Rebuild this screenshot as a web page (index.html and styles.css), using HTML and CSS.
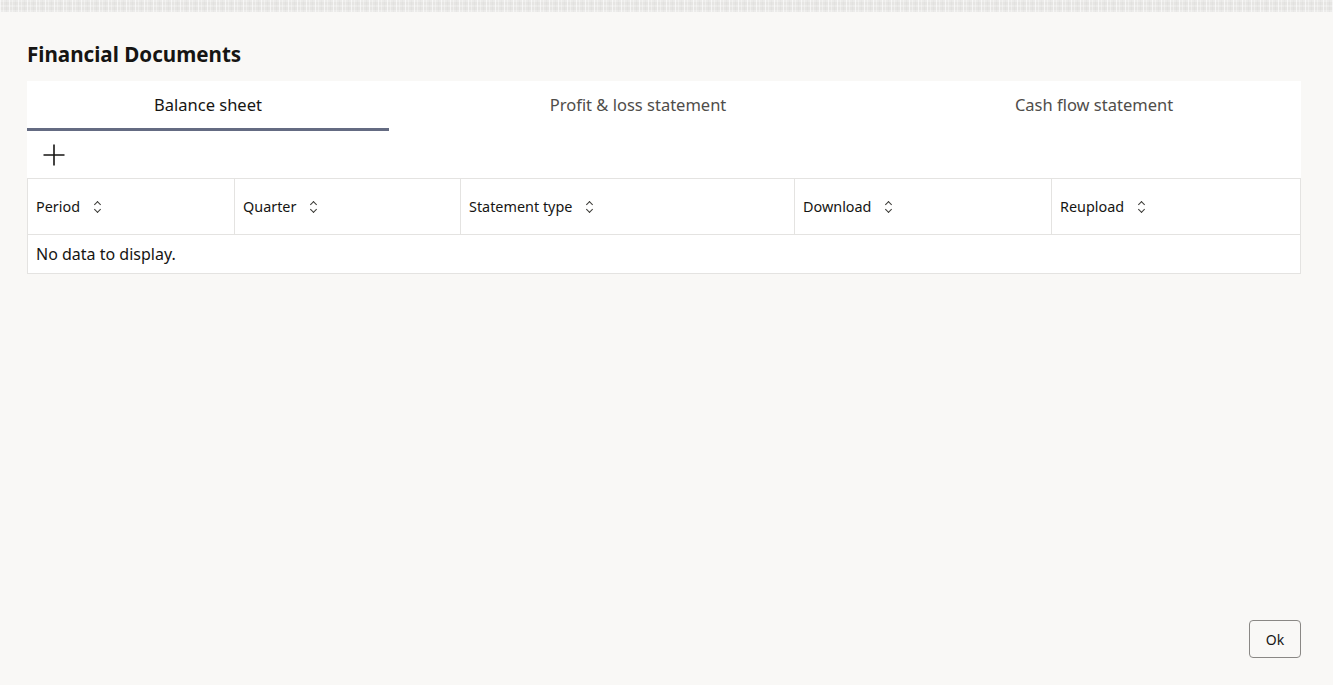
FILE: index.html
```html
<!DOCTYPE html>
<html lang="en">
<head>
  <meta charset="UTF-8">
  <meta name="viewport" content="width=device-width, initial-scale=1.0">
  <title>Financial Documents</title>
  <link rel="stylesheet" href="styles.css">
</head>
<body>

<div class="top-strip"></div>

<div class="page">
  <h1 class="title">Financial Documents</h1>

  <div class="panel">
    <div class="tabs">
      <div class="tab tab-active tab-1">Balance sheet</div>
      <div class="tab tab-2">Profit &amp; loss statement</div>
      <div class="tab tab-3">Cash flow statement</div>
    </div>

    <div class="toolbar">
      <button class="add-btn" title="Add">
        <svg width="24" height="24" viewBox="0 0 24 24"><path d="M12 1.5v21M1.5 12h21" stroke="#161513" stroke-width="1.6" fill="none"/></svg>
      </button>
    </div>

    <table class="grid">
      <thead>
        <tr>
          <th class="c1">Period <span class="sort"></span></th>
          <th class="c2">Quarter <span class="sort"></span></th>
          <th class="c3">Statement type <span class="sort"></span></th>
          <th class="c4">Download <span class="sort"></span></th>
          <th class="c5">Reupload <span class="sort"></span></th>
        </tr>
      </thead>
      <tbody>
        <tr>
          <td colspan="5" class="empty">No data to display.</td>
        </tr>
      </tbody>
    </table>
  </div>
</div>

<div class="footer">
  <button class="ok-btn">Ok</button>
</div>

</body>
</html>
```

FILE: styles.css
```css
html, body {
    height: 100%;
}

body {
    margin: 0;
    padding: 0;
    background: #f9f8f6;
    font-family: "Noto Sans", "Open Sans", sans-serif;
    color: #161513;
    display: flex;
    flex-direction: column;
}

.top-strip {
    height: 12px;
    background-color: #e6e5e3;
    background-image:
        repeating-linear-gradient(90deg, rgba(255,255,255,0.6) 0 1px, transparent 1px 3px, rgba(255,255,255,0.35) 3px 4px, transparent 4px 6px, rgba(0,0,0,0.02) 6px 7px, transparent 7px 9px),
        repeating-linear-gradient(0deg, rgba(255,255,255,0.25) 0 2px, transparent 2px 5px);
}

.page {
    padding: 0 32px 0 27px;
    flex: 1;
}

.title {
    margin: 28px 0 13px;
    font-size: 20.6px;
    font-weight: bold;
    line-height: 28px;
}

.panel {
    background: #fff;
}

.tabs {
    display: flex;
    height: 50px;
}

.tab {
    font-size: 16.5px;
    line-height: 48px;
    text-align: center;
    color: #4f4d4a;
    border-bottom: 3px solid transparent;
    box-sizing: border-box;
    height: 50px;
}

.tab-1 { width: 362px; }
.tab-2 { width: 498px; }
.tab-3 { flex: 1; }

.tab-active {
    color: #161513;
    border-bottom-color: #646b82;
}

.toolbar {
    height: 47px;
    display: flex;
    align-items: center;
    padding-left: 15px;
}

.add-btn {
    background: none;
    border: none;
    padding: 0;
    width: 24px;
    height: 24px;
    cursor: pointer;
}

.grid {
    width: 100%;
    border-collapse: collapse;
    border: 1px solid #e4e3e1;
    background: #fff;
}

.grid th {
    height: 55px;
    text-align: left;
    font-size: 14.4px;
    font-weight: normal;
    padding: 0 8px;
    border-right: 1px solid #e4e3e1;
    border-bottom: 1px solid #e4e3e1;
    white-space: nowrap;
}

.grid th:last-child {
    border-right: none;
}

.c1 { width: 190px; }
.c2 { width: 209px; }
.c3 { width: 317px; }
.c4 { width: 240px; }

.sort {
    display: inline-block;
    width: 8px;
    height: 12px;
    margin-left: 10px;
    vertical-align: -1px;
    position: relative;
}

.sort::before,
.sort::after {
    content: "";
    position: absolute;
    left: 1px;
    width: 4px;
    height: 4px;
    border-left: 1px solid #3a3936;
    border-top: 1px solid #3a3936;
}

.sort::before {
    top: 1px;
    transform: rotate(45deg);
}

.sort::after {
    top: 6px;
    transform: rotate(225deg);
}

.empty {
    height: 38px;
    padding: 0 8px;
    font-size: 16px;
    color: #161513;
}

.footer {
    display: flex;
    justify-content: flex-end;
    padding: 0 32px 27px 0;
}

.ok-btn {
    width: 52px;
    height: 38px;
    background: transparent;
    border: 1px solid #8a8885;
    border-radius: 4px;
    font-family: "Noto Sans", sans-serif;
    font-size: 14px;
    color: #161513;
    cursor: pointer;
}
```
